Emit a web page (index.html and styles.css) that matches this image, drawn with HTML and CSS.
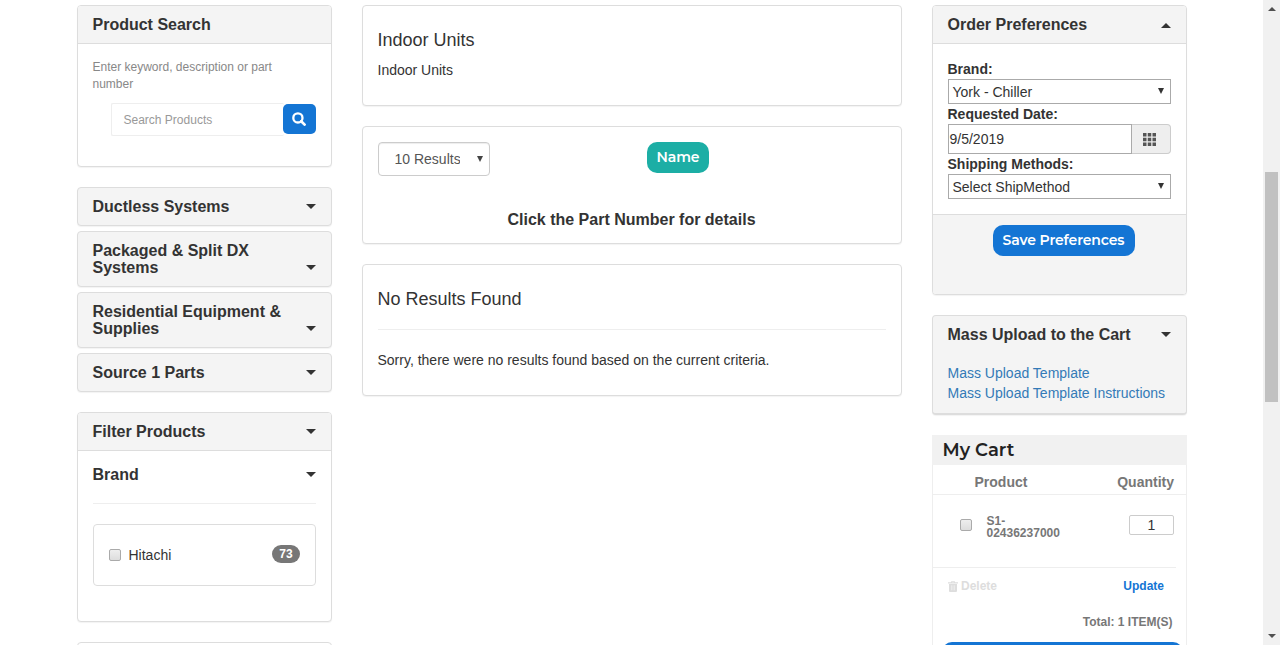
FILE: index.html
```html
<!DOCTYPE html>
<html lang="en">
<head>
<meta charset="utf-8">
<title>Indoor Units</title>
<link rel="stylesheet" href="styles.css">
</head>
<body>
<div class="viewport">
  <main class="page">
    <aside class="side">
      <section class="panel search">
        <header class="head"><h2>Product Search</h2></header>
        <div class="search-body">
          <p class="hint">Enter keyword, description or part number</p>
          <div class="search-row">
            <div class="search-field">Search Products</div>
            <button class="search-btn" aria-label="Search"><svg width="14" height="14" viewBox="0 0 14 14"><circle cx="5.9" cy="5.900" r="4.600" fill="none" stroke="#fff" stroke-width="2.300"/><path d="M9.200 9.200l3.400 3.400" stroke="#fff" stroke-width="2.700" stroke-linecap="round"/></svg></button>
          </div>
        </div>
      </section>
      <nav class="menu">
        <div class="panel menu-item"><h2>Ductless Systems</h2><i class="caret"></i></div>
        <div class="panel menu-item"><h2>Packaged &amp; Split DX Systems</h2><i class="caret"></i></div>
        <div class="panel menu-item"><h2>Residential Equipment &amp; Supplies</h2><i class="caret"></i></div>
        <div class="panel menu-item"><h2>Source 1 Parts</h2><i class="caret"></i></div>
      </nav>
      <section class="panel filter">
        <header class="head"><h2>Filter Products</h2><i class="caret"></i></header>
        <div class="filter-body">
          <div class="filter-title"><h2>Brand</h2><i class="caret"></i></div>
          <div class="option"><i class="check"></i><span class="option-name">Hitachi</span><span class="badge">73</span></div>
        </div>
      </section>
      <section class="panel next"></section>
    </aside>

    <div class="content">
      <section class="panel intro"><h1>Indoor Units</h1><p>Indoor Units</p></section>
      <section class="panel sort">
        <div class="sort-row">
          <div class="results"><span class="results-text">10 Results</span><i class="tri"></i></div>
          <button class="pill teal">Name</button>
        </div>
        <h2 class="note">Click the Part Number for details</h2>
      </section>
      <section class="panel empty"><h1>No Results Found</h1><hr><p>Sorry, there were no results found based on the current criteria.</p></section>
    </div>

    <aside class="side">
      <section class="panel prefs">
        <header class="head"><h2>Order Preferences</h2><i class="caret up"></i></header>
        <div class="prefs-body">
          <label>Brand:</label>
          <div class="select"><span>York - Chiller</span><i class="tri"></i></div>
          <label>Requested Date:</label>
          <div class="date"><span class="date-value">9/5/2019</span><span class="date-btn"><svg width="13" height="13" viewBox="0 0 13 13" fill="#555"><path d="M0 0h3.500v3.500H0zM4.750 0h3.500v3.500h-3.500zM9.500 0H13v3.500H9.500zM0 4.750h3.500v3.500H0zM4.750 4.750h3.500v3.500h-3.500zM9.500 4.750H13v3.500H9.500zM0 9.500h3.500V13H0zM4.750 9.500h3.500V13h-3.500zM9.500 9.500H13V13H9.500z"/></svg></span></div>
          <label>Shipping Methods:</label>
          <div class="select"><span>Select ShipMethod</span><i class="tri"></i></div>
        </div>
        <footer class="prefs-foot"><button class="pill blue">Save Preferences</button></footer>
      </section>
      <section class="panel upload">
        <div class="upload-title"><h2>Mass Upload to the Cart</h2><i class="caret"></i></div>
        <a>Mass Upload Template</a>
        <a>Mass Upload Template Instructions</a>
      </section>
      <section class="cart">
        <h2 class="cart-title">My Cart</h2>
        <div class="cart-body">
          <div class="cart-head"><span>Product</span><span>Quantity</span></div>
          <div class="cart-item"><i class="check"></i><span class="sku">S1-<br>02436237000</span><span class="qty">1</span></div>
          <div class="cart-actions">
            <span class="delete"><svg width="10" height="11" viewBox="0 0 10 11"><path fill="#ddd" d="M3 1.200Q3 0 4.200 0h1.600Q7 0 7 1.200h3v1.300H0V1.200zM4 1.200h2V.8H4zM1 3h8v7q0 1-1 1H2q-1 0-1-1z"/><path d="M3.500 4.300v5M5 4.300v5M6.500 4.300v5" stroke="#fff" stroke-width=".4"/></svg>Delete</span>
            <span class="update">Update</span>
          </div>
          <div class="total">Total: 1 ITEM(S)</div>
          <div class="checkout"></div>
        </div>
      </section>
    </aside>
  </main>
  <div class="scrollbar"><i class="arrow up"></i><div class="thumb"></div><i class="arrow"></i></div>
</div>
</body>
</html>
```

FILE: styles.css
```css
* { box-sizing: border-box; }
body { margin: 0; background: #fff; color: #333; font: 14px/20px "Liberation Sans", Arial, sans-serif; overflow: hidden; }
h1, h2, p { margin: 0 0 0 -.5px; }
h1 { font-size: 18px; line-height: 20px; font-weight: 400; }
h2 { font-size: 16px; line-height: 17px; font-weight: 700; }
button { border: 0; padding: 0; }
svg { display: block; }

.viewport { display: flex; justify-content: space-between; height: 645px; overflow: hidden; }
.page { display: flex; gap: 30px; padding: 5px 0 0 77px; }
.side { width: 255px; flex: none; }
.content { width: 540px; flex: none; }
.panel { border: 1px solid #ddd; border-radius: 4px; background: #fff; box-shadow: 0 1px 1px rgba(0,0,0,.05); margin-bottom: 20px; overflow: hidden; }
.head { height: 38px; padding: 10px 15px; display: flex; justify-content: space-between; background: #f4f4f4; border-bottom: 1px solid #ddd; }

.caret { width: 0; height: 0; flex: none; border: 5px solid transparent; border-top-color: #333; border-bottom: 0; align-self: flex-end; margin-bottom: 6px; }
.caret.up { border-top: 0; border-bottom: 5px solid #333; margin-bottom: 5px; }
.tri { width: 0; height: 0; flex: none; border: 3.5px solid transparent; border-top: 6px solid #333; border-bottom: 0; }

.search { height: 162px; }
.search-body { padding: 15px; }
.hint { max-width: 200px; font-size: 12px; line-height: 17px; color: #888; }
.search-row { display: flex; padding: 10px 0 0 18px; }
.search-field { width: 173px; height: 33px; border: 1px solid #eee; border-right: 0; border-radius: 2px; padding-left: 11.5px; font-size: 12px; line-height: 32px; color: #999; }
.search-btn { width: 33px; height: 30px; margin: 1px 0 0 -1px; padding-right: 2px; border-radius: 5px; background: #1475d4; display: flex; align-items: center; justify-content: center; }

.menu { display: flex; flex-direction: column; gap: 5px; margin-bottom: 20px; }
.menu-item { margin: 0; padding: 10px 15px; min-height: 39px; display: flex; justify-content: space-between; background: #f4f4f4; }
.menu-item h2 { max-width: 200px; }

.filter { height: 210px; }
.filter-body { padding: 15px; }
.filter-title { height: 38px; display: flex; justify-content: space-between; border-bottom: 1px solid #eee; margin-bottom: 20px; }
.filter-title .caret { margin-bottom: 26px; }
.option { height: 62px; border: 1px solid #ddd; border-radius: 4px; padding: 0 15px; display: flex; align-items: center; }
.option-name { flex: 1; padding-left: 7.5px; }
.badge { width: 28px; height: 18px; border-radius: 9px; background: #777; color: #fff; font-size: 12px; line-height: 18px; font-weight: 700; text-align: center; margin-bottom: 3px; }
.check { width: 12px; height: 12px; flex: none; border: 1px solid #aaa; border-radius: 2px; background: linear-gradient(#eee, #ddd); }
.next { height: 40px; }

.intro { height: 101px; padding: 24px 15px; }
.intro h1 { margin-bottom: 10px; }
.sort { height: 118px; padding: 15px; }
.sort-row { display: flex; }
.results { width: 112px; height: 34px; border: 1px solid #ccc; border-radius: 4px; box-shadow: inset 0 1px 1px rgba(0,0,0,.075); padding: 0 6px 0 15.5px; display: flex; align-items: center; justify-content: space-between; color: #555; }
.results .tri { border-top-color: #444; }
.results-text { width: 65px; overflow: hidden; white-space: nowrap; }
.pill { height: 31px; border-radius: 10px; color: #fff; font: 600 14px/30px Montserrat, Inter, sans-serif; letter-spacing: -.12px; white-space: nowrap; padding-bottom: 1px; }
.teal { width: 62px; margin-left: 157px; background: #1caea5; }
.blue { width: 142px; background: #1475d4; }
.note { text-align: center; margin-top: 35px; margin-left: -1px; }
.empty { height: 132px; padding: 24px 15px; }
.empty hr { margin: 20px 0; border: 0; border-top: 1px solid #eee; }

.prefs { height: 290px; display: flex; flex-direction: column; }
.prefs-body { height: 170px; padding: 15px; }
.prefs-body label { display: block; height: 20px; margin-left: -.5px; font-weight: 700; line-height: 21px; }
.select { height: 25px; border: 1px solid #aaa; padding: 0 6px 0 3.5px; display: flex; align-items: center; justify-content: space-between; }
.select .tri { margin-bottom: 1px; }
.date { display: flex; height: 30px; }
.date-value { flex: 1; border: 1px solid #aaa; padding-left: .5px; line-height: 28px; }
.date-btn { width: 39px; border: 1px solid #ccc; border-left: 0; border-radius: 0 4px 4px 0; background: #eee; display: flex; align-items: center; justify-content: center; padding-right: 3px; }
.prefs-foot { flex: 1; padding-top: 10px; padding-left: 8px; text-align: center; background: #f4f4f4; border-top: 1px solid #ddd; }

.upload { height: 100px; border-bottom-width: 2px; background: #f4f4f4; padding: 10px 15px; }
.upload-title { display: flex; justify-content: space-between; margin-bottom: 20px; }
.upload a { display: block; margin-left: -.5px; color: #337ab7; white-space: nowrap; }

.cart { color: #777; font-weight: 700; }
.cart-title { height: 30px; margin-left: 0; padding-left: 10.5px; background: #f1f1f1; color: #222; font: 600 18px/30px Montserrat, Inter, sans-serif; }
.cart-body { border: 1px solid #eee; border-top: 0; height: 240px; }
.cart-head { display: flex; justify-content: space-between; height: 30px; border-bottom: 1px solid #eee; padding: 0 12px 0 41.5px; line-height: 34px; }
.cart-item { height: 73px; margin-right: 10px; border-bottom: 1px solid #eee; display: flex; align-items: flex-start; padding: 20px 2px 0 27px; }
.cart-item .check { margin-top: 4px; }
.sku { flex: 1; padding: 0 0 0 14.5px; font-size: 12px; line-height: 12px; }
.qty { width: 45px; height: 20px; border: 1px solid #ccc; border-radius: 2px; color: #333; font-weight: 400; line-height: 19px; text-align: center; }
.cart-actions { display: flex; justify-content: space-between; padding: 8px 22px 0 15px; font-size: 12px; }
.delete { display: flex; align-items: center; gap: 3px; color: #ddd; }
.update { color: #1475d4; }
.total { text-align: right; padding: 16px 13.5px 0 0; font-size: 12px; }
.checkout { height: 31px; margin: 10px 3px 0 9px; border-radius: 10px; background: #1475d4; }

.scrollbar { width: 17px; background: #f1f1f1; display: flex; flex-direction: column; justify-content: space-between; align-items: center; padding: 7px 0; }
.thumb { width: 13px; height: 230px; background: #c1c1c1; margin-bottom: 72px; }
.arrow { width: 0; height: 0; border: 4px solid transparent; border-top-color: #505050; border-bottom: 0; }
.arrow.up { border-top: 0; border-bottom: 4px solid #505050; }
```
